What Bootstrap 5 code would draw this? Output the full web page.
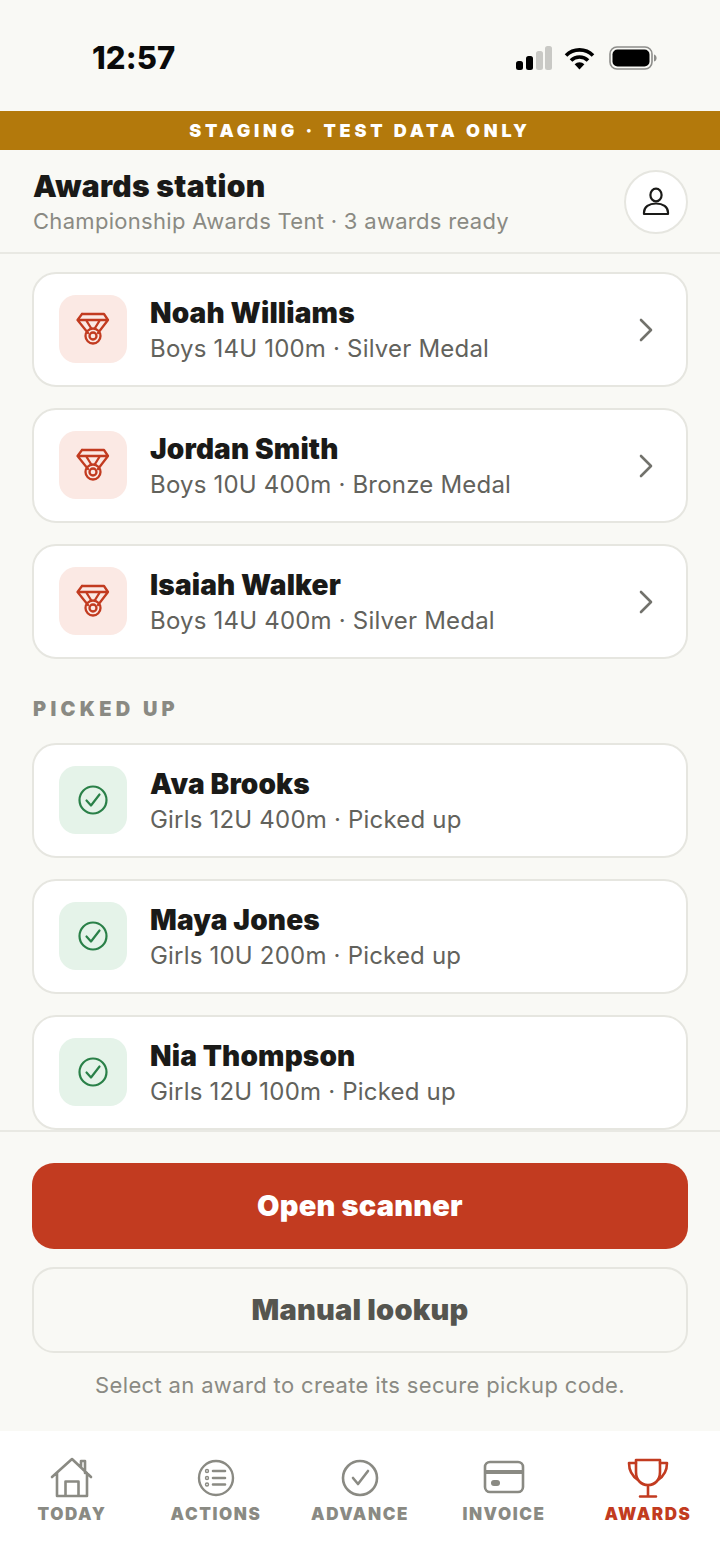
<!DOCTYPE html>
<html lang="en">
<head>
  <meta charset="UTF-8">
  <meta name="viewport" content="width=device-width, initial-scale=1">
  <title>Awards station</title>
  <link rel="stylesheet" href="https://cdn.jsdelivr.net/npm/bootstrap@5.3.3/dist/css/bootstrap.min.css">
  <style>
    html, body { height: 100%; }
    body {
      background-color: #f9f9f5;
      color: #1a1a18;
      font-family: Inter, "Liberation Sans", sans-serif;
      height: 1567px;
      overflow: hidden;
    }
    .status-row { height: 111px; padding: 43px 63px 0 92px; }
    .status-time { font-size: 31px; font-weight: 800; line-height: 30px; color: #0a0a0a; letter-spacing: .1px; }
    .stage-banner {
      height: 39px; line-height: 39px;
      background-color: #b3790c; color: #fff;
      font-size: 18px; font-weight: 900; letter-spacing: 3.8px;
    }
    .station-head { height: 104px; padding: 19px 32px 0 33px; border-bottom: 2px solid #e9e9e3; }
    .station-title { font-size: 30px; font-weight: 900; line-height: 34px; letter-spacing: .35px; }
    .station-sub { font-size: 22px; line-height: 28px; color: #8a8a83; margin-top: 4px; letter-spacing: .3px; }
    .profile-btn {
      width: 64px; height: 64px; background: #fff; margin-top: 1px;
      border: 2px solid #e6e6e0; border-radius: 50%;
    }
    .award-scroll { height: 876px; overflow: hidden; padding: 18px 32px 0; }
    .award-card {
      height: 115px; margin-bottom: 21px;
      background: #fff; border: 2px solid #e6e6e0; border-radius: 24px;
      padding: 0 32px 0 25px;
    }
    .award-tile { width: 68px; height: 68px; border-radius: 17px; margin: 0 23px 1px 0; flex: none; }
    .tile-red { background: #fbe9e4; }
    .tile-green { background: #e5f3e9; }
    .award-name { font-size: 28px; font-weight: 900; line-height: 34px; letter-spacing: .15px; color: #1a1a18; }
    .award-meta { font-size: 24px; line-height: 30px; color: #62625c; margin-top: 4px; letter-spacing: .2px; }
    .section-label {
      font-size: 20px; font-weight: 900; letter-spacing: 4.3px; line-height: 24px;
      color: #8a8a83; margin: 38px 0 22px 1px;
    }
    .action-area { height: 301px; border-top: 2px solid #e9e9e3; padding: 31px 32px 0; }
    .btn-scan, .btn-lookup {
      display: block; width: 100%; border-radius: 22px; font-weight: 900;
      --bs-btn-font-size: 29px; padding: 0; letter-spacing: .2px;
    }
    .btn-scan { height: 86px; background: #c23b20; border: 0; color: #fff; font-size: 29px; }
    .btn-lookup { height: 86px; margin-top: 18px; background: transparent; border: 2px solid #e6e6e0; color: #55554f; font-size: 29px; }
    .action-hint { font-size: 22px; line-height: 28px; color: #8a8a83; margin-top: 18px; letter-spacing: .35px; }
    .tab-bar { height: 136px; background: #fff; padding-top: 26px; }
    .tab-item { width: 144px; flex: none; color: #8a8a83; }
    .tab-item svg { display: block; margin: 0 auto; }
    .tab-label { font-size: 17px; font-weight: 900; letter-spacing: 1.6px; line-height: 20px; margin-top: 5px; }
    .tab-on { color: #c23b20; }
  </style>
</head>
<body>

<div class="status-row d-flex justify-content-between align-items-start">
  <div class="status-time">12:57</div>
  <div class="d-flex align-items-center gap-2" style="margin-top:3px">
    <svg width="37" height="24" viewBox="0 0 37 24">
      <rect x="1" y="15" width="7" height="9" rx="2.5" fill="#000"/>
      <rect x="11" y="10" width="7" height="14" rx="2.5" fill="#000"/>
      <rect x="21" y="5" width="7" height="19" rx="2.5" fill="#c9c9c5"/>
      <rect x="30" y="0" width="7" height="24" rx="2.5" fill="#c9c9c5"/>
    </svg>
    <svg class="ms-1" width="31" height="23" viewBox="0 0 31 23">
      <path d="M2 8.5a19 19 0 0 1 27 0M7 13.5a12 12 0 0 1 17 0" fill="none" stroke="#000" stroke-width="3.6"/>
      <path d="M10.6 17.2a7 7 0 0 1 9.8 0L15.5 22.6z" fill="#000"/>
    </svg>
    <svg class="ms-1" width="50" height="24" viewBox="0 0 50 24">
      <rect x="3" y="1" width="42" height="22" rx="7" fill="none" stroke="#8d8d8a" stroke-width="1.6"/>
      <rect x="5.500" y="3.500" width="37" height="17" rx="5" fill="#000"/>
      <path d="M47 8.5c1.8.5 2.6 2 2.6 3.5s-.8 3-2.6 3.5z" fill="#8d8d8a"/>
    </svg>
  </div>
</div>

<div class="stage-banner text-center">STAGING · TEST DATA ONLY</div>

<header class="station-head d-flex justify-content-between">
  <div>
    <div class="station-title">Awards station</div>
    <div class="station-sub">Championship Awards Tent · 3 awards ready</div>
  </div>
  <div class="profile-btn d-flex align-items-center justify-content-center">
    <svg width="30" height="30" viewBox="0 0 30 30" fill="none" stroke="#1a1a18" stroke-width="2.2">
      <ellipse cx="15" cy="8" rx="5.6" ry="6.4"/>
      <path d="M3 27v-1.5C3 20 8 16.5 15 16.5S27 20 27 25.5V27z" stroke-linejoin="round"/>
    </svg>
  </div>
</header>

<main class="award-scroll" id="awardList"></main>

<section class="action-area">
  <button type="button" class="btn btn-scan">Open scanner</button>
  <button type="button" class="btn btn-lookup">Manual lookup</button>
  <div class="action-hint text-center">Select an award to create its secure pickup code.</div>
</section>

<nav class="tab-bar d-flex text-center">
  <div class="tab-item">
    <svg width="44" height="42" viewBox="0 0 44 42" fill="none" stroke="currentColor" stroke-width="2.6" stroke-linejoin="round" stroke-linecap="round">
      <path d="M2 20L22 2l19 18M7 16v23h30V16M15.500 39V24.500h13V39M31 10V4h4v12"/>
    </svg>
    <div class="tab-label">TODAY</div>
  </div>
  <div class="tab-item">
    <svg width="44" height="42" viewBox="0 0 44 42" fill="none" stroke="currentColor" stroke-width="2.4" stroke-linecap="round">
      <circle cx="22" cy="21" r="17"/>
      <path stroke-width="2.6" d="M19 14h12M19 21h12M19 27.500h12"/>
      <circle cx="13" cy="14" r="1.500" stroke-width="1.400"/>
      <circle cx="13" cy="21" r="1.500" stroke-width="1.400"/>
      <circle cx="13" cy="27.500" r="1.500" stroke-width="1.400"/>
    </svg>
    <div class="tab-label">ACTIONS</div>
  </div>
  <div class="tab-item">
    <svg width="44" height="42" viewBox="0 0 44 42" fill="none" stroke="currentColor" stroke-width="2.6" stroke-linecap="round" stroke-linejoin="round">
      <circle cx="22" cy="21" r="17"/>
      <path d="M15 21l5 6 10-13"/>
    </svg>
    <div class="tab-label">ADVANCE</div>
  </div>
  <div class="tab-item">
    <svg width="44" height="42" viewBox="0 0 44 42" fill="none" stroke="currentColor" stroke-width="2.6">
      <rect x="3" y="5" width="38" height="30" rx="5"/>
      <path stroke-width="4" d="M3 15h38"/>
      <rect x="9" y="23" width="9" height="6" rx="3" fill="currentColor" stroke="none"/>
    </svg>
    <div class="tab-label">INVOICE</div>
  </div>
  <div class="tab-item tab-on">
    <svg width="44" height="42" viewBox="0 0 44 42" fill="none" stroke="currentColor" stroke-width="2.6" stroke-linecap="round" stroke-linejoin="round">
      <path d="M10 3h24v12c0 8-5 13-12 13S10 23 10 15zM22 28v11M14 39.500h16"/>
      <path d="M10 6H3c0 8 3 13 9 17M34 6h7c0 8-3 13-9 17"/>
    </svg>
    <div class="tab-label">AWARDS</div>
  </div>
</nav>

<script src="https://cdn.jsdelivr.net/npm/bootstrap@5.3.3/dist/js/bootstrap.bundle.min.js"></script>
<script>
  const medalIcon = `<svg width="34" height="34" viewBox="0 0 34 34" fill="none" stroke="#c23b20" stroke-width="2.3" stroke-linejoin="round" stroke-linecap="round">
      <path d="M6 2h22l4 6-10 13M6 2L1.500 8 12 21M2 8h30M10 8l5 8M24 8l-5 8"/>
      <circle cx="17" cy="24" r="7.500"/><circle cx="17" cy="24" r="3.500"/></svg>`;
  const checkIcon = `<svg width="30" height="30" viewBox="0 0 30 30" fill="none" stroke="#2a8048" stroke-width="2.2" stroke-linecap="round" stroke-linejoin="round">
      <circle cx="15" cy="15" r="13.500"/><path d="M8.500 15.500l4.500 5 8.500-11"/></svg>`;
  const chevron = `<svg class="ms-auto" width="16" height="26" viewBox="0 0 16 26" fill="none" stroke="#72726c" stroke-width="2.6" stroke-linecap="round" stroke-linejoin="round">
      <path d="M3 3l10 10L3 23"/></svg>`;

  const ready = [
    ['Noah Williams', 'Boys 14U 100m · Silver Medal'],
    ['Jordan Smith', 'Boys 10U 400m · Bronze Medal'],
    ['Isaiah Walker', 'Boys 14U 400m · Silver Medal']
  ];
  const pickedUp = [
    ['Ava Brooks', 'Girls 12U 400m · Picked up'],
    ['Maya Jones', 'Girls 10U 200m · Picked up'],
    ['Nia Thompson', 'Girls 12U 100m · Picked up']
  ];

  function awardRow(item, done) {
    return `<div class="award-card d-flex align-items-center">
      <div class="award-tile ${done ? 'tile-green' : 'tile-red'} d-flex align-items-center justify-content-center">${done ? checkIcon : medalIcon}</div>
      <div>
        <div class="award-name">${item[0]}</div>
        <div class="award-meta">${item[1]}</div>
      </div>
      ${done ? '' : chevron}
    </div>`;
  }

  document.getElementById('awardList').innerHTML =
    ready.map(r => awardRow(r, false)).join('') +
    '<div class="section-label">PICKED UP</div>' +
    pickedUp.map(r => awardRow(r, true)).join('');
</script>

</body>
</html>
